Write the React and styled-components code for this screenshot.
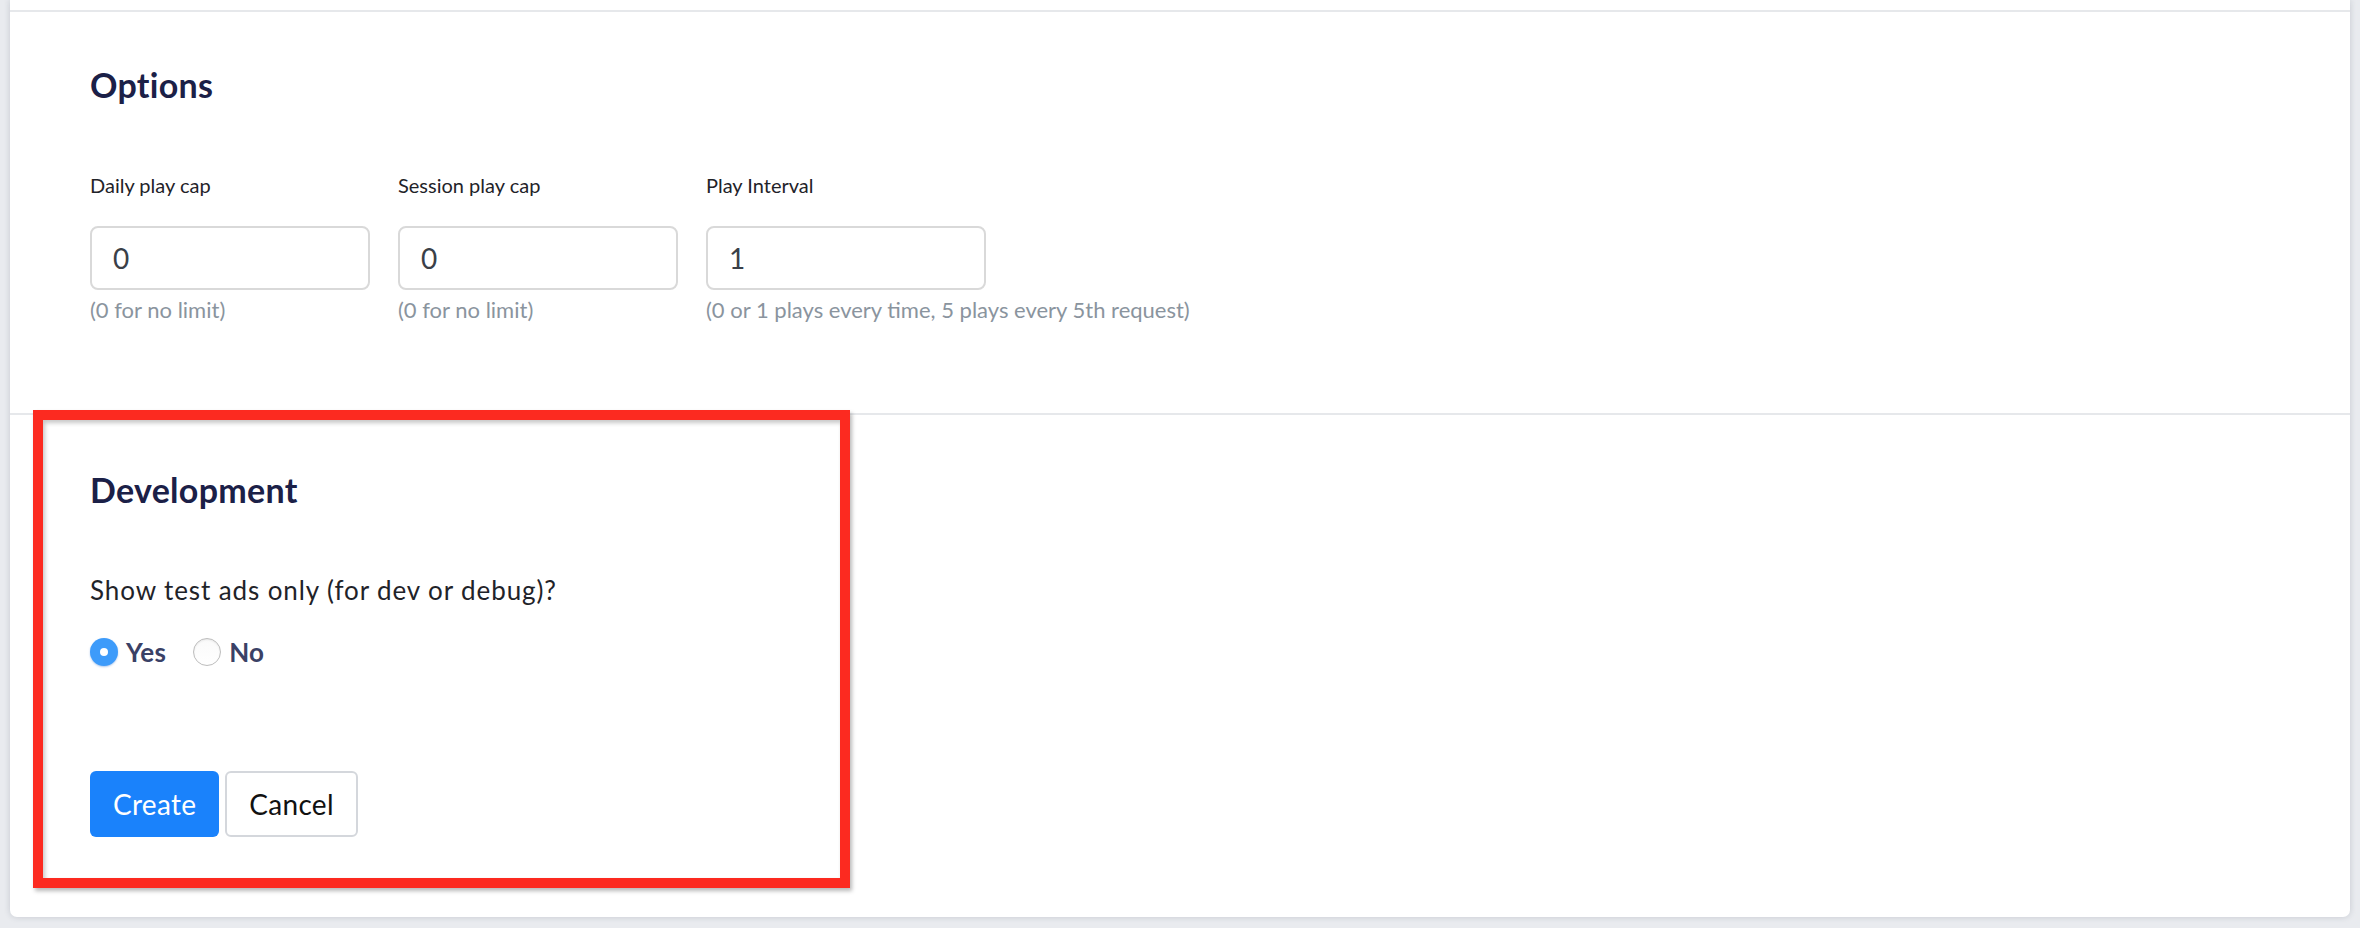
import React from "react";
import styled, { createGlobalStyle } from "styled-components";

const GlobalStyle = createGlobalStyle`
  html, body {
    margin: 0;
    padding: 0;
    background: #e9ebef;
    font-family: Lato, "Open Sans", Arial, sans-serif;
  }
`;

const Page = styled.div`
  padding: 0 10px 13px;
`;

const Card = styled.div`
  background: #fff;
  border-radius: 0 0 7px 7px;
  box-shadow: 0 0 6px rgba(40, 50, 70, 0.18);
`;

const TopStub = styled.div`
  height: 10px;
  border-bottom: 2px solid #e6e8eb;
`;

const Section = styled.section`
  position: relative;
  padding: ${(p) => p.$top}px 80px ${(p) => p.$bottom}px;
  border-bottom: ${(p) => (p.$divider ? "2px solid #e6e8eb" : "none")};
`;

const Heading = styled.h2`
  margin: 0;
  font-size: 34px;
  line-height: 40px;
  font-weight: 700;
  letter-spacing: 0.3px;
  color: #1b2047;
`;

const Fields = styled.div`
  display: grid;
  grid-template-columns: repeat(3, 280px);
  column-gap: 28px;
  margin-top: 67px;
`;

const Field = styled.div`
  display: flex;
  flex-direction: column;
`;

const Label = styled.label`
  font-size: 20px;
  line-height: 26px;
  color: #1f2329;
  margin-bottom: 28px;
  white-space: nowrap;
`;

const Input = styled.input`
  box-sizing: border-box;
  width: 280px;
  height: 64px;
  padding: 0 21px;
  border: 2px solid #d9d9d9;
  border-radius: 8px;
  font-family: inherit;
  font-size: 28px;
  color: #3a4048;
  background: #fff;
  outline: none;
`;

const Hint = styled.div`
  margin-top: 8px;
  font-size: 22px;
  line-height: 24px;
  color: #8a949e;
  white-space: nowrap;
`;

const Question = styled.p`
  margin: 65px 0 0;
  font-size: 26px;
  line-height: 30px;
  letter-spacing: 0.9px;
  color: #1f2329;
`;

const RadioRow = styled.div`
  display: flex;
  align-items: center;
  gap: 27px;
  margin-top: 32px;
  height: 30px;
`;

const RadioOption = styled.label`
  display: flex;
  align-items: center;
  gap: 8px;
  font-size: 26px;
  line-height: 30px;
  font-weight: 700;
  letter-spacing: 0.3px;
  color: #3a4166;
`;

const RadioDot = styled.span`
  box-sizing: border-box;
  width: 28px;
  height: 28px;
  border-radius: 50%;
  flex-shrink: 0;
  display: flex;
  align-items: center;
  justify-content: center;
  background: ${(p) => (p.$checked ? "#3d9bfa" : "linear-gradient(#fafafa, #ffffff)")};
  border: ${(p) => (p.$checked ? "none" : "1.5px solid #bdbdbd")};
  box-shadow: ${(p) =>
    p.$checked ? "0 1px 2px rgba(30, 100, 200, 0.35)" : "inset 0 1px 2px rgba(0,0,0,0.08)"};

  &::after {
    content: "";
    display: ${(p) => (p.$checked ? "block" : "none")};
    width: 8px;
    height: 8px;
    border-radius: 50%;
    background: #fff;
  }
`;

const Actions = styled.div`
  display: flex;
  gap: 6px;
  margin-top: 104px;
`;

const Button = styled.button`
  box-sizing: border-box;
  height: 66px;
  padding: 0 ${(p) => (p.$primary ? 23 : 22)}px;
  border-radius: 6px;
  font-family: inherit;
  font-size: 28px;
  letter-spacing: 0.3px;
  cursor: pointer;
  border: ${(p) => (p.$primary ? "none" : "2px solid #d4d7dc")};
  background: ${(p) => (p.$primary ? "#1a82fb" : "#fff")};
  color: ${(p) => (p.$primary ? "#fff" : "#111")};
`;

const Highlight = styled.div`
  position: absolute;
  top: -5px;
  left: 23px;
  width: 817px;
  height: 478px;
  box-sizing: border-box;
  border: 10px solid #fc2a20;
  box-shadow: 2px 3px 4px rgba(0, 0, 0, 0.28), inset 2px 3px 4px rgba(0, 0, 0, 0.22);
  pointer-events: none;
`;

const fields = [
  { label: "Daily play cap", value: "0", hint: "(0 for no limit)" },
  { label: "Session play cap", value: "0", hint: "(0 for no limit)" },
  { label: "Play Interval", value: "1", hint: "(0 or 1 plays every time, 5 plays every 5th request)" },
];

export default function App() {
  return (
    <>
      <GlobalStyle />
      <Page>
        <Card>
          <TopStub />

          <Section $divider $top={53} $bottom={91}>
            <Heading>Options</Heading>
            <Fields>
              {fields.map((f) => (
                <Field key={f.label}>
                  <Label>{f.label}</Label>
                  <Input defaultValue={f.value} />
                  <Hint>{f.hint}</Hint>
                </Field>
              ))}
            </Fields>
          </Section>

          <Section $top={55} $bottom={80}>
            <Highlight />
            <Heading>Development</Heading>
            <Question>Show test ads only (for dev or debug)?</Question>
            <RadioRow>
              <RadioOption>
                <RadioDot $checked />
                Yes
              </RadioOption>
              <RadioOption>
                <RadioDot />
                No
              </RadioOption>
            </RadioRow>
            <Actions>
              <Button $primary>Create</Button>
              <Button>Cancel</Button>
            </Actions>
          </Section>
        </Card>
      </Page>
    </>
  );
}
